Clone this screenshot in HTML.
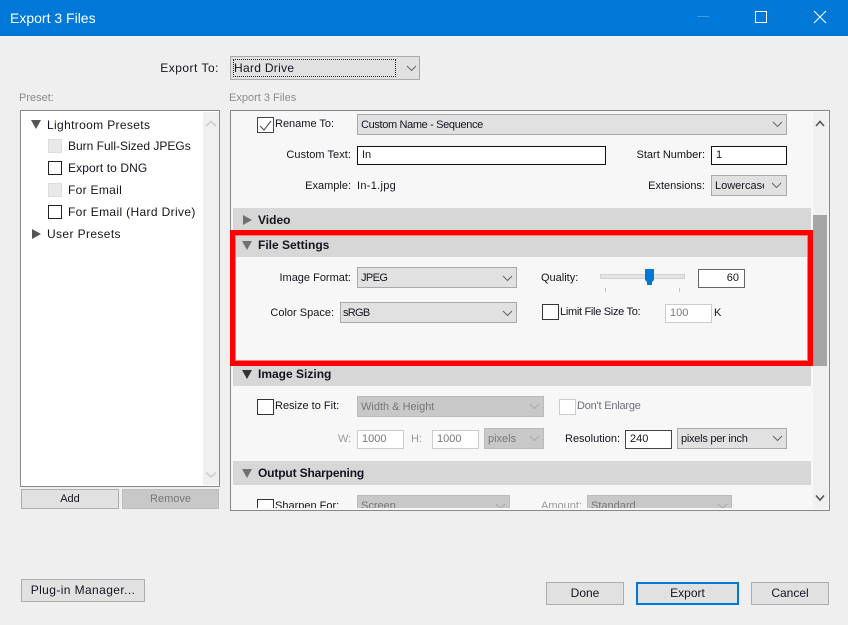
<!DOCTYPE html>
<html><head><meta charset="utf-8"><style>
html,body{margin:0;padding:0;width:848px;height:625px;overflow:hidden;background:#efefef}
body{position:relative;font-family:"Liberation Sans",sans-serif;font-size:12px;color:#141420}
div,span.a{position:absolute;box-sizing:border-box}
#c{font-size:11px}
.t{white-space:nowrap;height:16px;line-height:16px}
.r{text-align:right}
.b{font-weight:bold;font-size:12px}
.g{color:#80808c}
.sel{background:#e1e1e1;border:1px solid #a9a9a9;line-height:21px;padding-left:3px;white-space:nowrap;overflow:hidden}
.dis{background:#c8c8c8;border:1px solid #bcbcbc;color:#777}
.btn{background:#e1e1e1;border:1px solid #adadad;text-align:center;white-space:nowrap}
.cb{background:#fff;border:1px solid #222;width:14px;height:14px}
.cb2{background:#fff;border:1px solid #333;width:17px;height:16px}
.inp{background:#fff;border:1px solid #111;height:19px;line-height:17px;padding-left:4px}
.inp2{background:#fff;border:1px solid #ccc;height:19px;line-height:17px;padding-left:4px;color:#777}
.hd{left:3px;width:578px;background:#d7d7d7}
svg{position:absolute;overflow:visible}
</style></head><body>
<div style="left:0;top:0;width:848px;height:36px;background:#0078d7"></div>
<div class="t" style="left:10px;top:10px;color:#fff;font-size:14px;height:17px;line-height:17px">Export 3 Files</div>
<div style="left:697px;top:16px;width:12px;height:1px;background:#3f9ae2"></div>
<div style="left:755px;top:11px;width:12px;height:12px;border:1px solid #fff"></div>
<svg style="left:814px;top:11px" width="12" height="12"><path d="M0 0L12 12M12 0L0 12" stroke="#fff" stroke-width="1" fill="none"/></svg>

<div class="t r" style="left:130px;width:89px;top:60px;letter-spacing:.5px">Export To:</div>
<div class="sel" style="left:230px;top:56px;width:190px;height:24px;line-height:23px;letter-spacing:.3px">Hard Drive</div>
<div style="left:233px;top:59px;width:163px;height:18px;border:1px dotted #222"></div>
<svg style="left:406px;top:65px" width="11" height="6"><path d="M1 1L5.5 5.5L10 1" stroke="#666" fill="none"/></svg>

<div class="t g" style="left:19px;top:90px;color:#8c8c8c;font-size:11px">Preset:</div>
<div class="t g" style="left:229px;top:90px;color:#8c8c8c;font-size:11px">Export 3 Files</div>

<!-- left panel -->
<div style="left:20px;top:110px;width:200px;height:377px;background:#fff;border:1px solid #888"></div>
<div style="left:203px;top:112px;width:16px;height:373px;background:#f0f0f0"></div>
<svg style="left:205px;top:120px" width="12" height="8"><path d="M1 6L6 1.5L11 6" stroke="#cfcfcf" stroke-width="1.6" fill="none"/></svg>
<svg style="left:205px;top:471px" width="12" height="8"><path d="M1 1.5L6 6L11 1.5" stroke="#cfcfcf" stroke-width="1.6" fill="none"/></svg>
<svg style="left:31px;top:120px" width="10" height="9"><path d="M0 0H10L5 9Z" fill="#555"/></svg>
<div class="t" style="left:47px;top:117px;letter-spacing:.35px">Lightroom Presets</div>
<div class="cb" style="left:48px;top:139px;background:#e9e9e9;border-color:#ddd"></div>
<div class="t" style="left:68px;top:138px">Burn Full-Sized JPEGs</div>
<div class="cb" style="left:48px;top:161px"></div>
<div class="t" style="left:68px;top:160px;letter-spacing:.1px">Export to DNG</div>
<div class="cb" style="left:48px;top:183px;background:#e9e9e9;border-color:#ddd"></div>
<div class="t" style="left:68px;top:182px;letter-spacing:.3px">For Email</div>
<div class="cb" style="left:48px;top:205px"></div>
<div class="t" style="left:68px;top:204px;letter-spacing:.35px">For Email (Hard Drive)</div>
<svg style="left:32px;top:229px" width="9" height="10"><path d="M0 0L9 5L0 10Z" fill="#555"/></svg>
<div class="t" style="left:47px;top:226px;letter-spacing:.38px">User Presets</div>

<div class="btn" style="left:21px;top:489px;width:98px;height:20px;line-height:18px;font-size:11px">Add</div>
<div class="btn" style="left:122px;top:489px;width:97px;height:20px;line-height:18px;background:#c8c8c8;border-color:#bcbcbc;color:#777;font-size:11px">Remove</div>
<div class="btn" style="left:21px;top:579px;width:124px;height:23px;line-height:21px;letter-spacing:.4px">Plug-in Manager...</div>
<div class="btn" style="left:546px;top:582px;width:78px;height:23px;line-height:21px">Done</div>
<div class="btn" style="left:636px;top:582px;width:103px;height:23px;line-height:19px;border:2px solid #0078d7">Export</div>
<div class="btn" style="left:751px;top:582px;width:78px;height:23px;line-height:21px">Cancel</div>

<!-- right panel -->
<div style="left:230px;top:110px;width:600px;height:401px;background:#f7f7f7;border:1px solid #888"></div>
<div style="left:813px;top:112px;width:15px;height:397px;background:#f0f0f0"></div>
<div style="left:813px;top:215px;width:14px;height:151px;background:#a6a6a6"></div>
<svg style="left:815px;top:120px" width="12" height="8"><path d="M1 6L5 1.5L9 6" stroke="#555" stroke-width="1.6" fill="none"/></svg>
<svg style="left:815px;top:494px" width="12" height="8"><path d="M1 1.5L5 6L9 1.5" stroke="#555" stroke-width="1.6" fill="none"/></svg>

<div style="left:231px;top:111px;width:582px;height:397px;overflow:hidden" id="c">
  <div style="left:-231px;top:-111px;width:848px;height:625px">
    <div class="cb2" style="left:257px;top:117px;border-color:#444"></div>
    <svg style="left:259px;top:120px" width="13" height="11"><path d="M1 6L5 10L12 1" stroke="#555" stroke-width="1.1" fill="none"/></svg>
    <div class="t" style="left:275px;top:116px">Rename To:</div>
    <div class="sel" style="left:357px;top:114px;width:430px;height:21px;letter-spacing:-.35px">Custom Name - Sequence</div>
    <svg style="left:772px;top:121px" width="11" height="6"><path d="M1 1L5.5 5.5L10 1" stroke="#666" fill="none"/></svg>
    <div class="t r" style="left:251px;width:100px;top:147px;letter-spacing:.05px">Custom Text:</div>
    <div class="inp" style="left:357px;top:146px;width:249px">In</div>
    <div class="t r" style="left:605px;width:100px;top:147px">Start Number:</div>
    <div class="inp" style="left:711px;top:146px;width:76px">1</div>
    <div class="t r" style="left:251px;width:100px;top:178px">Example:</div>
    <div class="t" style="left:357px;top:178px;letter-spacing:.3px">In-1.jpg</div>
    <div class="t r" style="left:605px;width:100px;top:178px">Extensions:</div>
    <div class="sel" style="left:711px;top:175px;width:76px;height:21px"><span style="display:block;width:49px;overflow:hidden">Lowercase</span></div>
    <svg style="left:771px;top:182px" width="11" height="6"><path d="M1 1L5.5 5.5L10 1" stroke="#666" fill="none"/></svg>

    <div class="hd" style="left:233px;top:208px;height:23px"></div>
    <svg style="left:243px;top:215px" width="9" height="10"><path d="M0 0L9 5L0 10Z" fill="#707070"/></svg>
    <div class="t b" style="left:258px;top:212px">Video</div>

    <div class="hd" style="left:233px;top:233px;height:24px"></div>
    <svg style="left:242px;top:241px" width="10" height="9"><path d="M0 0H10L5 9Z" fill="#707070"/></svg>
    <div class="t b" style="left:258px;top:237px">File Settings</div>
    <div class="t r" style="left:251px;width:100px;top:270px">Image Format:</div>
    <div class="sel" style="left:357px;top:267px;width:160px;height:21px;letter-spacing:-.6px">JPEG</div>
    <svg style="left:502px;top:275px" width="11" height="6"><path d="M1 1L5.5 5.5L10 1" stroke="#666" fill="none"/></svg>
    <div class="t r" style="left:234px;width:100px;top:305px">Color Space:</div>
    <div class="sel" style="left:340px;top:302px;width:177px;height:21px;padding-left:2px;letter-spacing:-.7px">sRGB</div>
    <svg style="left:502px;top:310px" width="11" height="6"><path d="M1 1L5.5 5.5L10 1" stroke="#666" fill="none"/></svg>
    <div class="t" style="left:541px;top:270px">Quality:</div>
    <div style="left:600px;top:274px;width:85px;height:5px;background:#e4e4e4;border:1px solid #d2d2d2"></div>
    <svg style="left:645px;top:269px" width="9" height="16"><path d="M0 0H9V11L7 13V16H2V13L0 11Z" fill="#0078d7"/></svg>
    <div style="left:605px;top:288px;width:1px;height:4px;background:#c4c4c4"></div>
    <div style="left:679px;top:288px;width:1px;height:4px;background:#c4c4c4"></div>
    <div class="inp r" style="left:698px;top:269px;width:47px;border-color:#666;padding:0 5px 0 0">60</div>
    <div class="cb2" style="left:542px;top:304px"></div>
    <div class="t" style="left:560px;top:304px;letter-spacing:-.3px">Limit File Size To:</div>
    <div class="inp2" style="left:665px;top:304px;width:47px">100</div>
    <div class="t" style="left:714px;top:305px">K</div>

    <div class="hd" style="left:233px;top:366px;height:20px"></div>
    <svg style="left:242px;top:370px" width="10" height="9"><path d="M0 0H10L5 9Z" fill="#333"/></svg>
    <div class="t b" style="left:258px;top:366px">Image Sizing</div>
    <div class="cb2" style="left:257px;top:399px"></div>
    <div class="t" style="left:275px;top:398px">Resize to Fit:</div>
    <div class="sel dis" style="left:357px;top:396px;width:187px;height:21px">Width &amp; Height</div>
    <svg style="left:529px;top:403px" width="11" height="6"><path d="M1 1L5.5 5.5L10 1" stroke="#a8a8a8" fill="none"/></svg>
    <div class="cb2" style="left:559px;top:399px;border-color:#ccc"></div>
    <div class="t" style="left:577px;top:398px;color:#70707c;letter-spacing:-.2px">Don't Enlarge</div>
    <div class="t" style="left:338px;top:431px;color:#999">W:</div>
    <div class="inp2" style="left:357px;top:430px;width:47px">1000</div>
    <div class="t" style="left:411px;top:431px;color:#999">H:</div>
    <div class="inp2" style="left:432px;top:430px;width:47px">1000</div>
    <div class="sel dis" style="left:484px;top:428px;width:60px;height:21px">pixels</div>
    <svg style="left:529px;top:435px" width="11" height="6"><path d="M1 1L5.5 5.5L10 1" stroke="#a8a8a8" fill="none"/></svg>
    <div class="t" style="left:565px;top:431px">Resolution:</div>
    <div class="inp" style="left:625px;top:430px;width:47px;border-color:#444">240</div>
    <div class="sel" style="left:677px;top:428px;width:110px;height:21px;letter-spacing:-.25px">pixels per inch</div>
    <svg style="left:772px;top:435px" width="11" height="6"><path d="M1 1L5.5 5.5L10 1" stroke="#666" fill="none"/></svg>

    <div class="hd" style="left:233px;top:461px;height:24px"></div>
    <svg style="left:242px;top:469px" width="10" height="9"><path d="M0 0H10L5 9Z" fill="#707070"/></svg>
    <div class="t b" style="left:258px;top:465px;letter-spacing:-.15px">Output Sharpening</div>
    <div class="cb2" style="left:257px;top:499px"></div>
    <div class="t" style="left:275px;top:498px">Sharpen For:</div>
    <div class="sel dis" style="left:357px;top:495px;width:153px;height:21px">Screen</div>
    <svg style="left:495px;top:503px" width="11" height="6"><path d="M1 1L5.5 5.5L10 1" stroke="#a8a8a8" fill="none"/></svg>
    <div class="t" style="left:541px;top:498px;color:#999">Amount:</div>
    <div class="sel dis" style="left:587px;top:495px;width:145px;height:21px">Standard</div>
    <svg style="left:717px;top:503px" width="11" height="6"><path d="M1 1L5.5 5.5L10 1" stroke="#a8a8a8" fill="none"/></svg>
  </div>
</div>

<!-- red highlight -->
<div style="left:230px;top:230px;width:583px;height:136px;border:5px solid #f00;box-shadow:inset 0 0 0 1px #f77"></div>
</body></html>
